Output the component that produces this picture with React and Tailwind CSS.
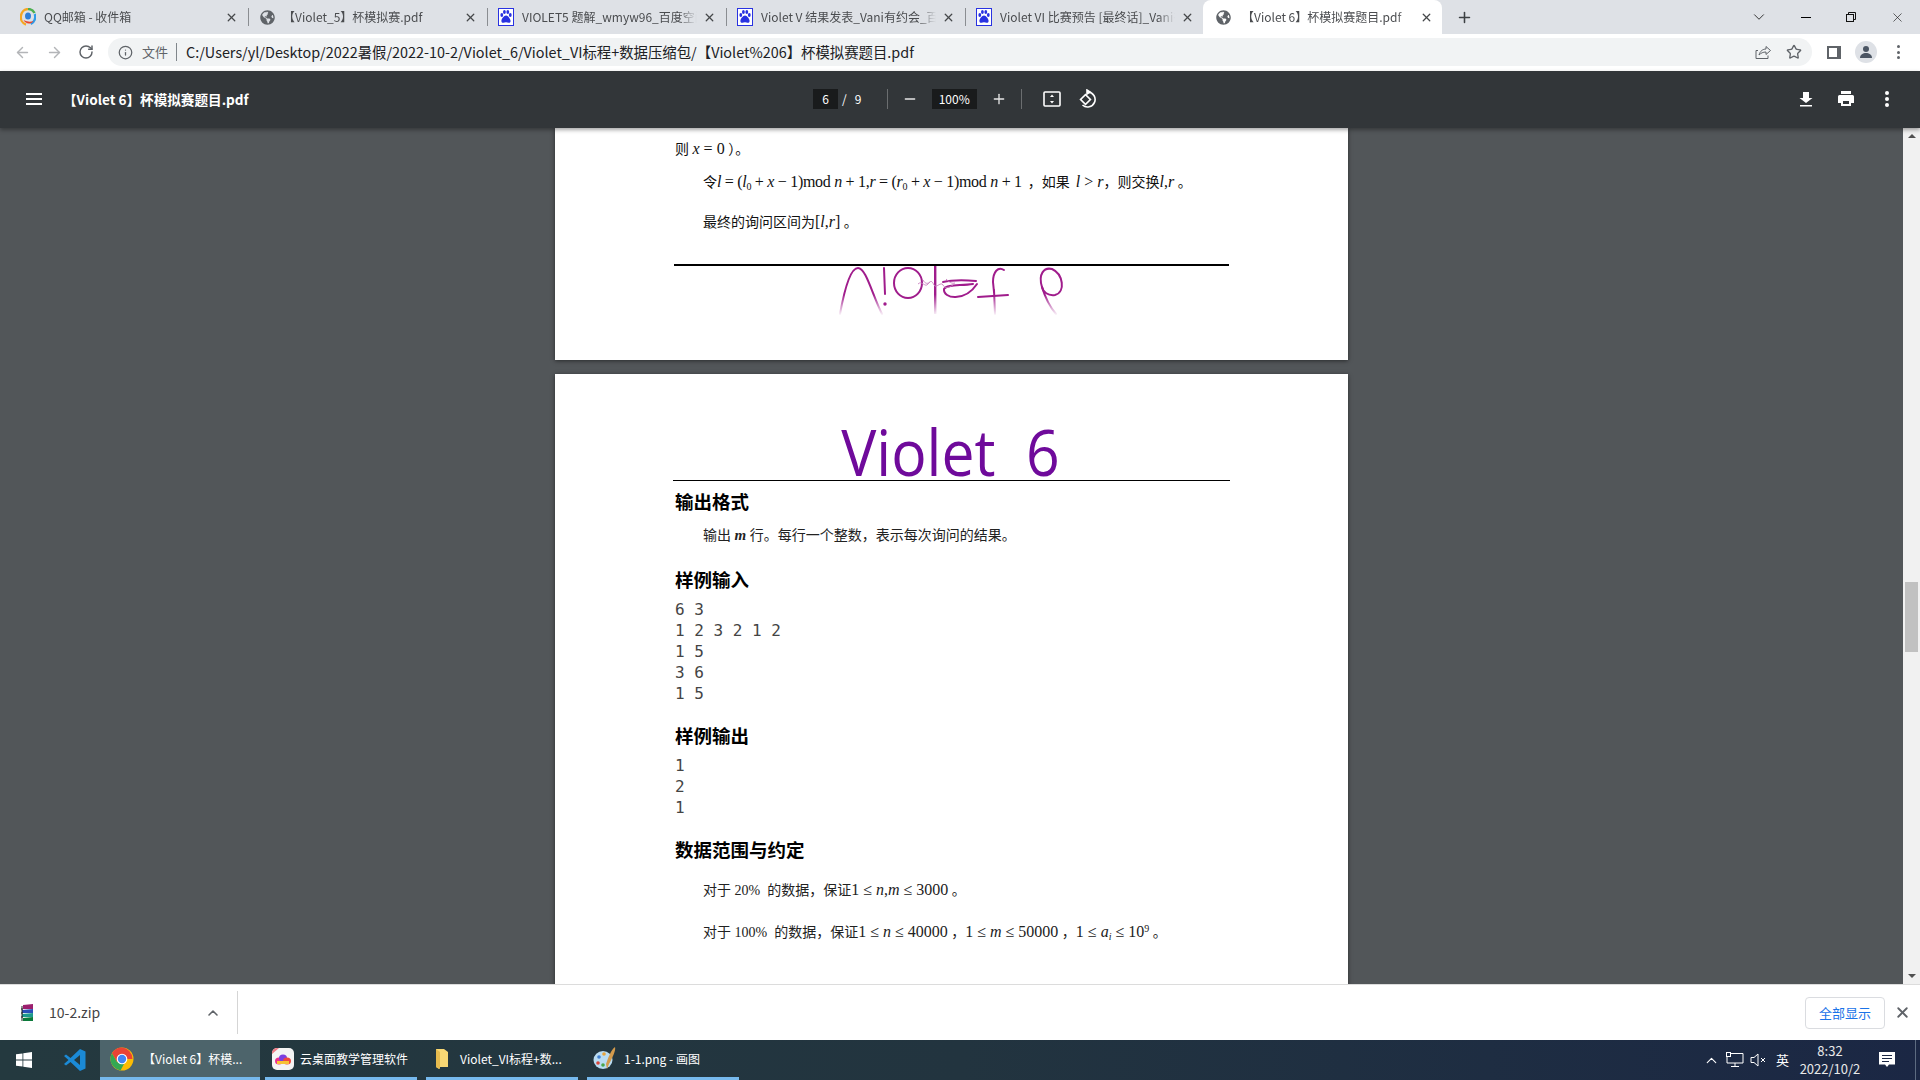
import { FaGlobeAmericas } from "react-icons/fa";
import { ArrowLeft, ArrowRight, RotateCw, Info, Star, ChevronDown, ChevronUp, Plus, Minus, X } from "lucide-react";

const ui = "font-['Noto_Sans_CJK_SC','Noto_Sans',sans-serif]";
const paper = "font-['Liberation_Serif','Noto_Sans_CJK_SC',serif]";

const QQIcon = () => (
  <svg width="16" height="18" viewBox="0 0 16 18">
    <path d="M8 1a7.5 8 0 0 0-2 15.6" fill="none" stroke="#f5a623" strokeWidth="2.4" />
    <path d="M8 1a7.5 8 0 0 1 6.6 4" fill="none" stroke="#4caf50" strokeWidth="2.4" />
    <path d="M14.8 6a7.5 8 0 0 1-4 10" fill="none" stroke="#2f9be8" strokeWidth="2.4" />
    <path d="M3.5 12c2 4 7 5 10 1-3 1-6 1-10-1z" fill="#e8452c" />
    <ellipse cx="8" cy="8" rx="3" ry="3.6" fill="#2f7fd8" />
  </svg>
);

const PawIcon = () => (
  <svg width="16" height="18" viewBox="0 0 16 18">
    <rect x="0.5" y="0.5" width="15" height="17" fill="#fff" stroke="#2932e1" />
    <g fill="#2932e1">
      <ellipse cx="3.8" cy="7" rx="1.4" ry="2" />
      <ellipse cx="6.4" cy="4" rx="1.4" ry="2" />
      <ellipse cx="9.8" cy="4" rx="1.4" ry="2" />
      <ellipse cx="12.3" cy="7" rx="1.4" ry="2" />
      <path d="M8 7.5c-2 0-4.6 3.4-4.6 5.4 0 2 1.8 2.2 4.6 1.4 2.8.8 4.6.6 4.6-1.4 0-2-2.6-5.4-4.6-5.4z" />
    </g>
  </svg>
);

const Globe = () => <FaGlobeAmericas size={15} color="#5f6368" />;

const tabs = [
  { icon: <QQIcon />, title: "QQ邮箱 - 收件箱" },
  { icon: <Globe />, title: "【Violet_5】杯模拟赛.pdf" },
  { icon: <PawIcon />, title: "VIOLET5 题解_wmyw96_百度空间" },
  { icon: <PawIcon />, title: "Violet V 结果发表_Vani有约会_百度空间" },
  { icon: <PawIcon />, title: "Violet VI 比赛预告 [最终话]_Vani有约会" },
  { icon: <Globe />, title: "【Violet 6】杯模拟赛题目.pdf", active: true },
];

const Tab = ({ icon, title, active, last }) => (
  <div className={`relative w-[239px] h-[34px] flex items-center pl-[12px] pr-[8px] shrink-0 ${active ? "bg-white rounded-t-lg" : ""}`}>
    <div className="w-[16px] h-[18px] flex items-center justify-center shrink-0">{icon}</div>
    <div className={`w-[175px] overflow-hidden whitespace-nowrap text-[12px] text-[#4a4c4f] [mask-image:linear-gradient(to_right,black_90%,transparent)] ${active ? "ml-[8px] pl-[3px]" : "ml-[8px]"}`}>
      {title}
    </div>
    <X size={13} strokeWidth={2.4} className="ml-[6px] text-[#45474a] shrink-0" />
    {!last && !active && <div className="absolute -right-[2px] top-[8px] h-[18px] w-px bg-[#8a8d91]" />}
  </div>
);

const Signature = () => (
  <svg width="240" height="60" viewBox="0 0 240 60" className="-mt-[4px] ml-[155px]">
    <defs>
      <linearGradient id="ink" gradientUnits="userSpaceOnUse" x1="0" y1="0" x2="0" y2="54">
        <stop offset="0.6" stopColor="#a01c8c" />
        <stop offset="1" stopColor="#a01c8c" stopOpacity="0" />
      </linearGradient>
    </defs>
    <g fill="none" stroke="url(#ink)" strokeWidth="2" strokeLinecap="round">
      <path d="M10 52C14 30 20 6 28 6 36 6 42 32 52 52" />
      <path d="M54 6L55 32" />
      <path d="M164 28L165 52" />
      <path d="M212 25C215 35 220 45 226 52" />
    </g>
    <rect x="104" y="4" width="2.400" height="48" fill="url(#ink)" />
    <g fill="none" stroke="#a01c8c" strokeWidth="2" strokeLinecap="round">
      <ellipse cx="78" cy="21" rx="14" ry="15" />
      <path d="M113 20C122 18 134 18 146 19" />
      <path d="M143 22C130 24 117 22 114 27 113 37 135 40 147 22" />
      <path d="M174 8C168 4 163 10 163 20L164 30" />
      <path d="M148 35L178 33" />
      <path d="M212 25C208 12 214 5 222 7 233 12 236 30 225 33 218 34 213 30 212 25" />
    </g>
    <path d="M88 22c4-4 7 4 10 0s4-3 6 1 7-4 9 0 5 3 10 0M93 18c2 4 5 4 7 2M116 17c3 3 6 5 9 4" fill="none" stroke="#c77fbd" strokeWidth="0.9" />
    <circle cx="55" cy="42" r="1.7" fill="#a01c8c" />
  </svg>
);

const I = ({ children }) => <i>{children}</i>;

const Heading = ({ className, children }) => (
  <div className={`text-[18.5px] leading-[26px] font-bold text-black ${ui} ${className}`}>{children}</div>
);

const Mono = ({ lines }) => (
  <div className="font-['DejaVu_Sans_Mono',monospace] text-[16px] leading-[21px] text-[#444] whitespace-pre">
    {lines.map((l, i) => <div key={i}>{l}</div>)}
  </div>
);

const App = () => (
  <div className={`w-[1920px] h-[1080px] overflow-hidden flex flex-col bg-white ${ui}`}>
    {/* tab strip */}
    <div className="h-[34px] bg-[#dee1e6] flex items-center pl-[8px] shrink-0">
      {tabs.map((t, i) => <Tab key={i} {...t} last={i === 4} />)}
      <Plus size={17} strokeWidth={2.2} className="ml-[14px] text-[#3c4043]" />
      <ChevronDown size={18} strokeWidth={1.2} className="ml-[277px] text-[#222]" />
      <div className="ml-[33px] w-[10px] h-px bg-black" />
      <svg width="10" height="10" viewBox="0 0 10 10" className="ml-[35px]" fill="none" stroke="#111">
        <rect x="0.5" y="2.5" width="7" height="7" />
        <path d="M2.5 2.5V0.5H9.5V7.5H7.5" />
      </svg>
      <X size={15} strokeWidth={1} className="ml-[34px] text-[#111]" />
    </div>

    {/* address bar */}
    <div className="h-[37px] pb-[1px] bg-white flex items-center shrink-0">
      <ArrowLeft size={17} className="ml-[14px] text-[#b3b5b8]" />
      <ArrowRight size={17} className="ml-[15px] text-[#b3b5b8]" />
      <RotateCw size={16} strokeWidth={2.2} className="ml-[15px] text-[#5f6368]" />
      <div className="ml-[14px] w-[1704px] h-[28px] rounded-full bg-[#f1f3f4] flex items-center">
        <Info size={15} className="ml-[10px] text-[#5f6368]" />
        <span className="ml-[9px] text-[13px] text-[#5f6368]">文件</span>
        <div className="ml-[8px] h-[18px] w-px bg-[#80868b]" />
        <span className="ml-[9px] text-[14.4px] text-[#202124] whitespace-nowrap">C:/Users/yl/Desktop/2022暑假/2022-10-2/Violet_6/Violet_VI标程+数据压缩包/【Violet%206】杯模拟赛题目.pdf</span>
        <svg width="16" height="16" viewBox="0 0 16 16" className="ml-auto" fill="none" stroke="#5f6368">
          <path d="M3 6.5H1v8h12v-3" />
          <path d="M4 11c1-4 4-6 7-6V2.5L15.5 6.5 11 10.5V8C8 8 6 9 4 11z" />
        </svg>
        <Star size={16} strokeWidth={2} className="ml-[15px] mr-[10px] text-[#5f6368]" />
      </div>
      <div className="ml-[15px] w-[14px] h-[13px] border-y-2 border-l-2 border-[#5f6368] bg-white flex justify-end">
        <div className="w-[4px] h-full bg-[#5f6368]" />
      </div>
      <div className="ml-[14px] w-[22px] h-[22px] rounded-full bg-[#dee1e6] flex items-center justify-center">
        <svg width="14" height="14" viewBox="0 0 14 14" fill="#4b5563">
          <circle cx="7" cy="4" r="3" />
          <path d="M1 13c0-3.5 3-5 6-5s6 1.500 6 5z" />
        </svg>
      </div>
      <div className="ml-[20px] flex flex-col gap-[2.5px]">
        <span className="w-[3px] h-[3px] rounded-full bg-[#5f6368]" />
        <span className="w-[3px] h-[3px] rounded-full bg-[#5f6368]" />
        <span className="w-[3px] h-[3px] rounded-full bg-[#5f6368]" />
      </div>
    </div>

    {/* pdf toolbar */}
    <div className="relative z-10 h-[57px] pb-[1px] bg-[#323639] flex items-center text-white shrink-0 shadow-[0_2px_4px_rgba(0,0,0,0.35)]">
      <div className="ml-[26px] w-[16px] flex flex-col gap-[3px]">
        <span className="h-[2px] bg-white" />
        <span className="h-[2px] bg-white" />
        <span className="h-[2px] bg-white" />
      </div>
      <div className="ml-[21px] w-[750px] text-[13.6px] font-bold whitespace-nowrap">【Violet 6】杯模拟赛题目.pdf</div>
      <div className="w-[25px] h-[20px] bg-[#191b1c] flex items-center justify-center text-[12px]">6</div>
      <span className="ml-[4px] text-[12px]">/</span>
      <span className="ml-[8px] text-[12px] w-[6px]">9</span>
      <div className="ml-[26px] w-px h-[20px] bg-[#6b6e70]" />
      <Minus size={16} className="ml-[14px] text-[#e6e6e6]" />
      <div className="ml-[14px] w-[45px] h-[20px] bg-[#191b1c] flex items-center justify-center text-[12px]">100%</div>
      <Plus size={16} className="ml-[14px] text-[#e6e6e6]" />
      <div className="ml-[14px] w-px h-[20px] bg-[#6b6e70]" />
      <svg width="18" height="18" viewBox="0 0 18 18" className="ml-[21px]" fill="none" stroke="#fff" strokeWidth="1.6">
        <rect x="1" y="2" width="16" height="14" rx="1" />
        <path d="M9 4.500L7 7h4zM9 13.500L7 11h4z" fill="#fff" stroke="none" />
      </svg>
      <svg width="18" height="20" viewBox="0 0 18 20" className="ml-[17px]" fill="none" stroke="#fff" strokeWidth="1.6">
        <path d="M9 1v4l3-2z" fill="#fff" />
        <path d="M10 3a7.500 7.500 0 1 1-5.500 13" />
        <rect x="4" y="7" width="7" height="7" transform="rotate(45 7.500 10.500)" />
      </svg>
      <svg width="16" height="16" viewBox="0 0 16 16" className="ml-[702px]" fill="#fff">
        <path d="M5 1h6v6h3.500L8 12 1.500 7H5zM2 14h12v1.600H2z" />
      </svg>
      <svg width="18" height="18" viewBox="0 0 18 18" className="ml-[23px]" fill="#fff">
        <path d="M4 1h10v3H4zM2.500 5h13A1.500 1.500 0 0 1 17 6.500V13h-3v3H4v-3H1V6.500A1.500 1.500 0 0 1 2.500 5zM6 11v3h6v-3z" />
      </svg>
      <div className="ml-[30px] flex flex-col gap-[2px]">
        <span className="w-[4px] h-[4px] rounded-full bg-white" />
        <span className="w-[4px] h-[4px] rounded-full bg-white" />
        <span className="w-[4px] h-[4px] rounded-full bg-white" />
      </div>
    </div>

    {/* viewer */}
    <div className="flex-1 min-h-0 flex bg-[#525659] overflow-hidden">
      <div className="flex-1 flex flex-col items-center gap-[14px]">
        <div className={`w-[793px] h-[232px] shrink-0 bg-white shadow-[0_1px_4px_rgba(0,0,0,0.5)] pl-[120px] pt-[11px] text-[14px] text-[#111] ${paper}`}>
          <div className="h-[20px] leading-[20px]">则 <span className="text-[16px]"><I>x</I> = 0</span> ）。</div>
          <div className="mt-[13px] h-[20px] leading-[20px] pl-[28px] whitespace-nowrap">
            令<span className="text-[16px] tracking-[-0.3px] mr-[6px]"><I>l</I> = (<I>l</I><sub className="text-[10px]">0</sub> + <I>x</I> − 1)mod <I>n</I> + 1,<I>r</I> = (<I>r</I><sub className="text-[10px]">0</sub> + <I>x</I> − 1)mod <I>n</I> + 1</span>，如果<span className="text-[16px] ml-[6px]"><I>l</I> &gt; <I>r</I></span>，则交换<span className="text-[16px]"><I>l</I>,<I>r</I></span> 。
          </div>
          <div className="mt-[20px] h-[20px] leading-[20px] pl-[28px]">
            最终的询问区间为<span className="text-[16px]">[<I>l</I>,<I>r</I>]</span> 。
          </div>
          <div className="mt-[32px] w-[555px] -ml-[1px] border-t-2 border-black" />
          <Signature />
        </div>

        <div className={`w-[793px] h-[700px] shrink-0 bg-white shadow-[0_1px_4px_rgba(0,0,0,0.5)] pl-[120px] text-[14px] text-[#222] ${paper}`}>
          <div className="pt-[44px] -ml-[2px] w-[557px] h-[107px] border-b border-black text-center">
            <div className="scale-x-[0.92] -translate-x-[1px] font-['Open_Sans',sans-serif] font-medium text-[#6f0a9b] text-[64px] leading-[68px] whitespace-pre">Violet  6</div>
          </div>
          <Heading className="mt-[7px]">输出格式</Heading>
          <div className="mt-[11px] h-[20px] leading-[20px] pl-[28px]">输出 <span className="text-[15px] font-bold"><I>m</I></span> 行。每行一个整数，表示每次询问的结果。</div>
          <Heading className="mt-[21px]">样例输入</Heading>
          <div className="mt-[7px]"><Mono lines={["6 3", "1 2 3 2 1 2", "1 5", "3 6", "1 5"]} /></div>
          <Heading className="mt-[18px]">样例输出</Heading>
          <div className="mt-[7px]"><Mono lines={["1", "2", "1"]} /></div>
          <Heading className="mt-[18px]">数据范围与约定</Heading>
          <div className="mt-[18px] h-[20px] leading-[20px] pl-[28px] whitespace-pre">对于 20%  的数据，保证<span className="text-[16px]">1 ≤ <I>n</I>,<I>m</I> ≤ 3000</span> 。</div>
          <div className="mt-[22px] h-[20px] leading-[20px] pl-[28px] whitespace-pre">对于 100%  的数据，保证<span className="text-[16px]">1 ≤ <I>n</I> ≤ 40000</span> ，<span className="text-[16px]">1 ≤ <I>m</I> ≤ 50000</span> ，<span className="text-[16px]">1 ≤ <I>a</I><sub className="text-[10px]"><I>i</I></sub> ≤ 10<sup className="text-[10px]">9</sup></span> 。</div>
        </div>
      </div>
      <div className="relative w-[17px] bg-[#f1f1f1] flex flex-col items-center shrink-0">
        <div className="mt-[6px] w-0 h-0 border-x-[4px] border-x-transparent border-b-[4px] border-b-[#505050]" />
        <div className="absolute top-[454px] left-[2px] w-[13px] h-[70px] bg-[#c1c1c1]" />
        <div className="mt-auto mb-[6px] w-0 h-0 border-x-[4px] border-x-transparent border-t-[4px] border-t-[#505050]" />
      </div>
    </div>

    {/* download bar */}
    <div className="h-[56px] bg-white border-t border-[#dcdcdc] flex items-center shrink-0">
      <svg width="18" height="18" viewBox="0 0 18 18" className="ml-[19px]">
        <path d="M4 1l10-1v5H4z" fill="#9c1f6e" />
        <path d="M3 6l11-1v4H3z" fill="#2a4fb8" />
        <path d="M3 10l11-1v4H3z" fill="#1e9a8e" />
        <path d="M4 14l10-1v4H4z" fill="#0b7a3a" />
        <path d="M3 2v15M4 5h-2M4 9h-2M4 13h-2" stroke="#222" fill="none" />
      </svg>
      <span className="ml-[12px] w-[156px] text-[14px] text-[#444]">10-2.zip</span>
      <ChevronUp size={16} strokeWidth={2.4} className="text-[#5f6368]" />
      <div className="ml-[16px] h-[43px] w-px bg-[#d5d5d5]" />
      <div className="ml-auto w-[80px] h-[32px] rounded border border-[#dadce0] flex items-center justify-center text-[13px] text-[#1a73e8]">全部显示</div>
      <X size={17} strokeWidth={2.6} className="ml-[9px] mr-[9px] text-[#5f6368]" />
    </div>

    {/* taskbar */}
    <div className="h-[40px] bg-gradient-to-r from-[#24393f] via-[#22343f] to-[#1b2744] flex items-stretch text-white text-[12px] shrink-0">
      <div className="ml-[16px] self-center">
        <svg width="16" height="16" viewBox="0 0 16 16" fill="#fff">
          <path d="M0 2.300l6.500-.9v6.200H0zM7.300 1.300L16 0v7.600H7.300zM0 8.400h6.500v6.200L0 13.700zM7.300 8.400H16V16l-8.700-1.200z" />
        </svg>
      </div>
      <div className="ml-[31px] self-center">
        <svg width="24" height="24" viewBox="0 0 24 24">
          <path d="M17 1l5.500 2.600v16.800L17 23 7.500 14l-4.500 3.500L1 16l4.500-4L1 8l2-1.500L7.500 10z" fill="#1b8ad6" />
          <path d="M17 7l-6 5 6 5z" fill="#24393f" />
        </svg>
      </div>
      <div className="ml-[13px] w-[160px] bg-[#4d646b] border-b-[3px] border-[#76b9ed] flex items-center pl-[10px]">
        <svg width="24" height="24" viewBox="0 0 24 24">
          <circle cx="12" cy="12" r="11.500" fill="#fbbc04" />
          <path d="M12 .5A11.500 11.500 0 0 0 2 6.300L7 15l5-3h10.500A11.500 11.500 0 0 0 12 .5z" fill="#ea4335" />
          <path d="M2 6.300A11.500 11.500 0 0 0 10.500 23.400L14 17 7 15z" fill="#34a853" />
          <circle cx="12" cy="12" r="5.300" fill="#fff" />
          <circle cx="12" cy="12" r="4.200" fill="#4285f4" />
        </svg>
        <span className="ml-[9px] whitespace-nowrap">【Violet 6】杯模...</span>
      </div>
      <div className="ml-[5px] w-[152px] border-b-[3px] border-[#76b9ed] flex items-center pl-[7px]">
        <svg width="22" height="24" viewBox="0 0 22 24">
          <rect x="0" y="1" width="22" height="22" rx="5" fill="#f4f4f4" />
          <path d="M0 7V6a5 5 0 0 1 5-5h2z" fill="#ef7a85" />
          <ellipse cx="7" cy="14" rx="4" ry="3.500" fill="#ec2f8c" />
          <ellipse cx="11" cy="11" rx="4" ry="3.500" fill="#7c3fe0" />
          <ellipse cx="15" cy="14" rx="4" ry="3.500" fill="#f0483e" />
          <rect x="5" y="14" width="12" height="3" fill="#f7c234" />
        </svg>
        <span className="ml-[6px] whitespace-nowrap">云桌面教学管理软件</span>
      </div>
      <div className="ml-[9px] w-[152px] border-b-[3px] border-[#76b9ed] flex items-center pl-[9px]">
        <svg width="14" height="22" viewBox="0 0 14 22">
          <path d="M1 1h8l4 3v15l-8 0-1 2-3-2z" fill="#f7d774" />
          <path d="M1 1l4 3v17l-4-2z" fill="#e7bb4e" />
        </svg>
        <span className="ml-[11px] whitespace-nowrap">Violet_VI标程+数...</span>
      </div>
      <div className="ml-[9px] w-[152px] border-b-[3px] border-[#76b9ed] flex items-center pl-[6px]">
        <svg width="24" height="26" viewBox="0 0 24 26">
          <ellipse cx="10" cy="14" rx="9.500" ry="9" fill="#b9dcf2" />
          <circle cx="6" cy="11" r="1.800" fill="#3f7fd0" />
          <circle cx="11" cy="8" r="1.800" fill="#e8a33a" />
          <circle cx="5" cy="17" r="1.800" fill="#d8453a" />
          <circle cx="10" cy="19" r="1.800" fill="#4aa64a" />
          <path d="M22 1c1 3-2 10-6 17l-2 5-1-5c2-6 5-14 9-17z" fill="#d39a4c" />
        </svg>
        <span className="ml-[7px] whitespace-nowrap">1-1.png - 画图</span>
      </div>
      <ChevronUp size={17} strokeWidth={1.6} className="ml-[964px] self-center" />
      <svg width="18" height="16" viewBox="0 0 18 16" className="ml-[6px] self-center" fill="none" stroke="#fff">
        <path d="M5 1.500h12V11H1V5M9 11v3M5 14.500h8" />
        <rect x="0.500" y="0.500" width="4" height="4" />
      </svg>
      <svg width="16" height="14" viewBox="0 0 16 14" className="ml-[6px] self-center" fill="none" stroke="#fff">
        <path d="M1 4.500h3L8 1v12L4 9.500H1zM11 5l4 4M15 5l-4 4" />
      </svg>
      <span className="ml-[10px] self-center text-[13px] w-[16px]">英</span>
      <div className="ml-[5px] w-[66px] flex flex-col items-center justify-center leading-[18px] text-[13px] text-[#eaeaea]">
        <span>8:32</span>
        <span>2022/10/2</span>
      </div>
      <div className="ml-[16px] self-center">
        <svg width="16" height="16" viewBox="0 0 16 16">
          <path d="M0 0h16v12.500h-6L8 15l-2-2.500H0z" fill="#fff" />
          <path d="M3 3.500h10M3 6.500h10M3 9.500h7" stroke="#1b2744" />
        </svg>
      </div>
      <div className="ml-[20px] my-0 w-px bg-[#5d6b80]" />
    </div>
  </div>
);

export default App;
